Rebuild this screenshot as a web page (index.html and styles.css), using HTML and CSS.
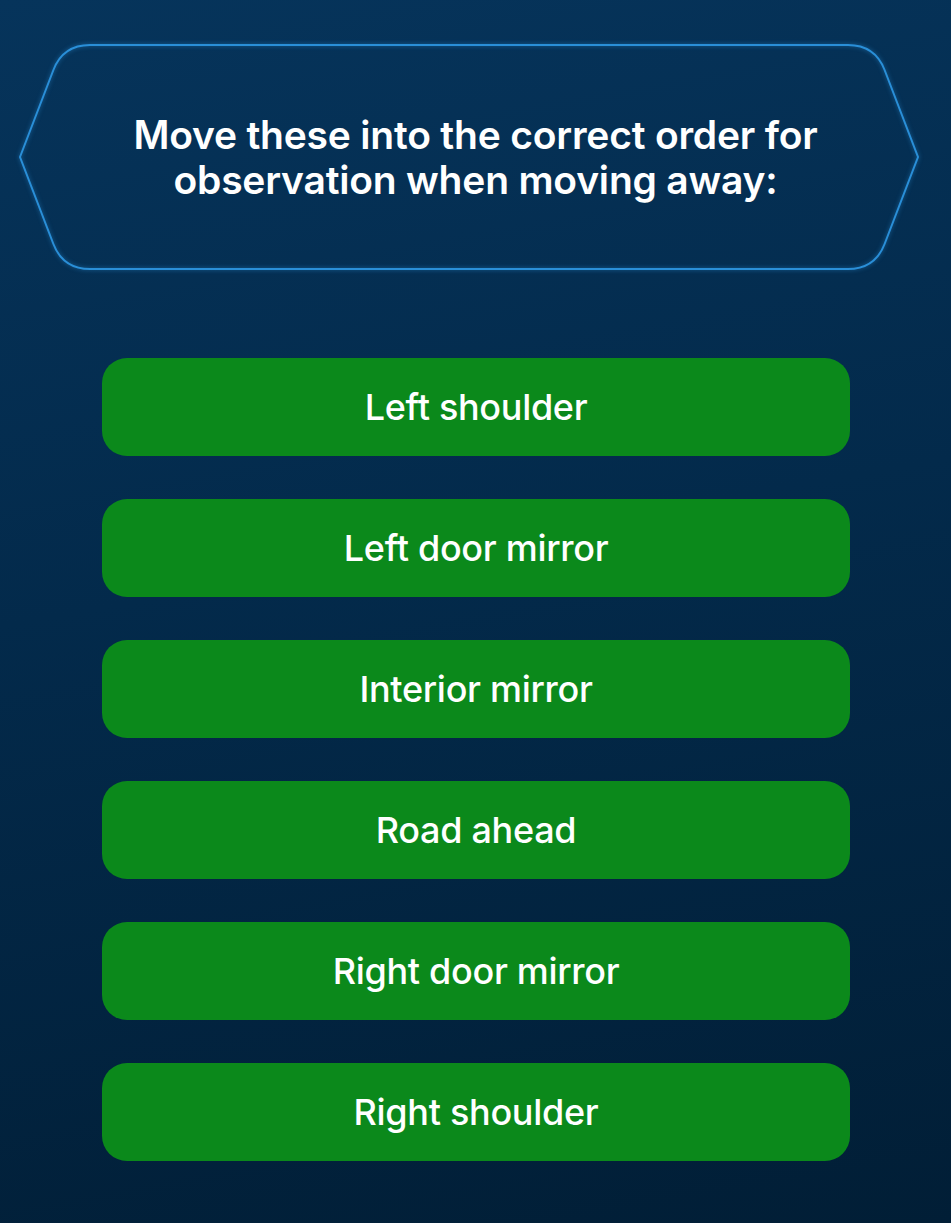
FILE: index.html
```html
<!DOCTYPE html>
<html lang="en">
<head>
<meta charset="utf-8">
<title>Order quiz</title>
<link rel="stylesheet" href="styles.css">
</head>
<body>
<main class="page">
  <section class="question">
    <svg class="frame" viewBox="0 0 951 226" width="951" height="226" aria-hidden="true">
      <defs>
        <linearGradient id="stubL" x1="0" x2="1" y1="0" y2="0">
          <stop offset="0" stop-color="#2a8fd8" stop-opacity="0"/>
          <stop offset="1" stop-color="#2a8fd8" stop-opacity="1"/>
        </linearGradient>
        <linearGradient id="stubR" x1="0" x2="1" y1="0" y2="0">
          <stop offset="0" stop-color="#2a8fd8" stop-opacity="1"/>
          <stop offset="1" stop-color="#2a8fd8" stop-opacity="0"/>
        </linearGradient>
      </defs>
      <path d="M0 113 H20" stroke="url(#stubL)" stroke-width="2" fill="none"/>
      <path d="M918 113 H951" stroke="url(#stubR)" stroke-width="2" fill="none"/>
      <path class="hex" d="M20 113 L53.4 26 Q63 1 90 1 H848 Q875 1 884.6 26 L918 113 L884.6 200 Q875 225 848 225 H90 Q63 225 53.4 200 Z"/>
    </svg>
    <h1 class="question-text">Move these into the correct order for<br>observation when moving away:</h1>
  </section>
  <ul class="options">
    <li class="option">Left shoulder</li>
    <li class="option">Left door mirror</li>
    <li class="option">Interior mirror</li>
    <li class="option">Road ahead</li>
    <li class="option">Right door mirror</li>
    <li class="option">Right shoulder</li>
  </ul>
</main>
</body>
</html>
```

FILE: styles.css
```css
html, body {
  margin: 0;
  padding: 0;
}
body {
  min-height: 1223px;
  background: linear-gradient(170deg, #06345b 0%, #032a4b 45%, #011e36 100%);
  font-family: "Inter", "Open Sans", sans-serif;
  color: #ffffff;
}
.page {
  padding-top: 44px;
  padding-bottom: 60px;
}
.question {
  position: relative;
  height: 226px;
  display: flex;
  align-items: center;
  justify-content: center;
}
.frame {
  position: absolute;
  left: 0;
  top: 0;
  overflow: visible;
}
.hex {
  fill: none;
  stroke: #2a8fd8;
  stroke-width: 2;
  filter: drop-shadow(0 0 2px rgba(42, 143, 216, 0.6));
}
.question-text {
  position: relative;
  margin: 0;
  font-size: 39px;
  line-height: 45px;
  font-weight: 600;
  letter-spacing: -0.2px;
  text-align: center;
}
.options {
  list-style: none;
  margin: 88px 0 0;
  padding: 0;
  display: flex;
  flex-direction: column;
  align-items: center;
  gap: 43px;
}
.option {
  width: 748px;
  height: 98px;
  margin-left: 1px;
  border-radius: 25px;
  background: #0b891b;
  display: flex;
  align-items: center;
  justify-content: center;
  font-size: 36px;
  font-weight: 500;
  letter-spacing: -0.3px;
}
```
